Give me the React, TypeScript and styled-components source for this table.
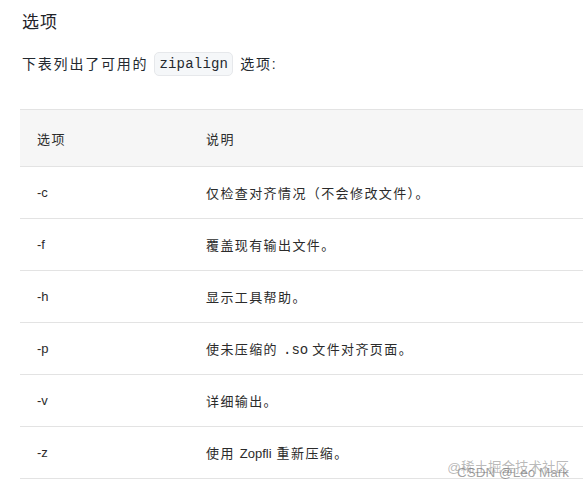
import styled, { createGlobalStyle } from 'styled-components'

const GlobalStyle = createGlobalStyle`
  html, body {
    margin: 0;
    padding: 0;
    background: #ffffff;
    overflow: hidden;
  }
`

const cjk = `"Liberation Sans", "Noto Sans CJK SC", sans-serif`

const Page = styled.main`
  position: relative;
  width: 583px;
  height: 491px;
  overflow: hidden;
  padding: 12px 0 0 20px;
  box-sizing: border-box;
  color: #1f2328;
  font-family: ${cjk};
`

const Title = styled.h2`
  margin: 0 0 0 2px;
  font-size: 17px;
  font-weight: 400;
  line-height: 22px;
  letter-spacing: 1px;
`

const Lead = styled.p`
  display: flex;
  align-items: center;
  margin: 18px 0 0 2px;
  font-size: 14px;
  line-height: 24px;
  letter-spacing: 1.8px;
  color: #24292f;
`

const Code = styled.code`
  margin: 0 7px 0 6px;
  padding: 2px 4px;
  border: 1px solid #e6e8eb;
  border-radius: 5px;
  background: #f5f7f9;
  font-family: "Liberation Mono", "DejaVu Sans Mono", monospace;
  font-size: 14px;
  line-height: 18px;
  letter-spacing: 0.2px;
  color: #24292f;
`

const Table = styled.table`
  width: 620px;
  margin-top: 33px;
  table-layout: fixed;
  border-collapse: collapse;
  border-top: 1px solid #e3e3e3;
`

const OptCol = styled.col`
  width: 186px;
`

const HeadRow = styled.tr`
  background: #f6f6f6;
`

const Cell = styled.td<{ $head?: boolean; $first?: boolean }>`
  height: ${(p) => (p.$head ? 57 : 52)}px;
  padding: 0 0 0 ${(p) => (p.$first ? 17 : 0)}px;
  border-bottom: 1px solid #e3e3e3;
  font-family: ${(p) => (p.$first && !p.$head ? `"Liberation Sans", Arial, sans-serif` : cjk)};
  font-size: 13px;
  font-weight: 400;
  letter-spacing: ${(p) => (p.$first && !p.$head ? 0 : 1.4)}px;
  color: #2b2b2b;
  text-align: left;
  vertical-align: middle;
  box-sizing: border-box;
`

const Mono = styled.span`
  font-family: "Liberation Mono", "DejaVu Sans Mono", monospace;
  font-size: 14px;
  letter-spacing: 0;
  margin: 0 4px 0 5px;
`

const Latin = styled.span`
  font-family: "Liberation Sans", Arial, sans-serif;
  letter-spacing: 0;
  margin: 0 5px 0 5px;
`

const Watermark = styled.div`
  position: absolute;
  right: 14px;
  bottom: 10px;
  width: 112px;
  height: 20px;
  pointer-events: none;
`

const MarkLine = styled.span<{ $top: number; $alpha: number }>`
  position: absolute;
  right: 0;
  top: ${(p) => p.$top}px;
  white-space: nowrap;
  font-family: ${cjk};
  font-size: 13.5px;
  line-height: 14px;
  color: rgba(100, 100, 100, ${(p) => p.$alpha});
`

const rows: { opt: string; desc: React.ReactNode }[] = [
  { opt: '-c', desc: '仅检查对齐情况（不会修改文件）。' },
  { opt: '-f', desc: '覆盖现有输出文件。' },
  { opt: '-h', desc: '显示工具帮助。' },
  {
    opt: '-p',
    desc: (
      <>
        使未压缩的<Mono>.so</Mono>文件对齐页面。
      </>
    ),
  },
  { opt: '-v', desc: '详细输出。' },
  {
    opt: '-z',
    desc: (
      <>
        使用<Latin>Zopfli</Latin>重新压缩。
      </>
    ),
  },
]

const App = () => {
  return (
    <Page>
      <GlobalStyle />
      <Title>选项</Title>
      <Lead>
        下表列出了可用的<Code>zipalign</Code>选项:
      </Lead>

      <Table>
        <colgroup>
          <OptCol />
          <col />
        </colgroup>
        <thead>
          <HeadRow>
            <Cell as="th" $head $first>选项</Cell>
            <Cell as="th" $head>说明</Cell>
          </HeadRow>
        </thead>
        <tbody>
          {rows.map((row) => (
            <tr key={row.opt}>
              <Cell $first>{row.opt}</Cell>
              <Cell>{row.desc}</Cell>
            </tr>
          ))}
        </tbody>
      </Table>

      <Watermark>
        <MarkLine $top={0} $alpha={0.45}>@稀土掘金技术社区</MarkLine>
        <MarkLine $top={5} $alpha={0.6}>CSDN @Leo Mark</MarkLine>
      </Watermark>
    </Page>
  )
}

export default App
